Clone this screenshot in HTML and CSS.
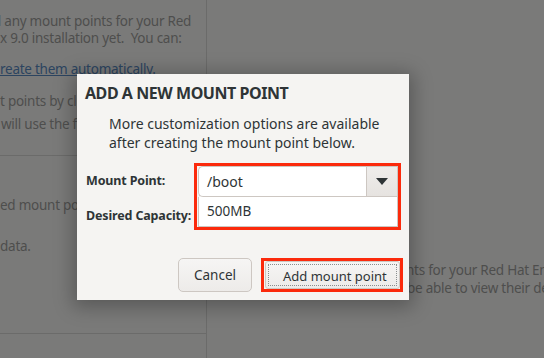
FILE: index.html
```html
<!DOCTYPE html>
<html>
<head>
<meta charset="utf-8">
<link rel="stylesheet" href="styles.css">
</head>
<body>
<div class="screen">
  <div class="left-pane">
    <div class="section intro">
      <p class="line l1">d any mount points for your Red</p>
      <p class="line l2">x 9.0 installation yet.&nbsp; You can:</p>
      <p class="line link">reate them automatically.</p>
      <p class="line l4">t points by cl</p>
      <p class="line l5">will use the fo</p>
    </div>
    <div class="section second">
      <p class="line l6">ed mount po</p>
      <p class="line l7">data.</p>
    </div>
    <div class="section third"></div>
  </div>
  <div class="right-pane">
    <p class="line r1">nts for your Red Hat En</p>
    <p class="line r2">be able to view their de</p>
  </div>
</div>

<div class="dialog">
  <h1 class="title">ADD A NEW MOUNT POINT</h1>
  <p class="desc">More customization options are available<br>after creating the mount point below.</p>
  <div class="form">
    <div class="labels">
      <label class="label">Mount Point:</label>
      <label class="label">Desired Capacity:</label>
    </div>
    <div class="highlight fields">
      <div class="combo">
        <div class="combo-entry">/boot</div>
        <div class="combo-btn">
          <svg width="12" height="7" viewBox="0 0 12 7"><path d="M0 0 L12 0 L6 7 Z" fill="#2e3436"/></svg>
        </div>
      </div>
      <div class="entry">500MB</div>
    </div>
  </div>
  <div class="actions">
    <button class="btn cancel">Cancel</button>
    <div class="highlight btn-wrap">
      <button class="btn add"><span class="focus">Add mount point</span></button>
    </div>
  </div>
</div>
</body>
</html>
```

FILE: styles.css
```css
* { box-sizing: border-box; }
html, body { margin: 0; padding: 0; }
body {
  width: 544px;
  height: 358px;
  overflow: hidden;
  background: #7a7a79;
  font-family: "Noto Sans", "Open Sans", sans-serif;
  position: relative;
}
.screen {
  display: flex;
  height: 358px;
}
.left-pane {
  width: 207px;
  border-right: 1px solid #6b6b6a;
  overflow: hidden;
  display: flex;
  flex-direction: column;
}
.line {
  margin: 0;
  font-size: 13.5px;
  letter-spacing: -0.25px;
  color: #4e4e4d;
  white-space: nowrap;
  line-height: 18px;
}
.intro {
  height: 156px;
  border-bottom: 1px solid #6b6b6a;
  padding-top: 12px;
}
.l1 { margin-left: -7px; }
.l2 { margin-top: -1px; }
.link {
  margin-top: 13px;
  color: #2c4460;
  text-decoration: underline;
  text-decoration-thickness: 1px;
}
.l4 { margin-top: 14px; }
.l5 { margin-top: 5px; margin-left: 1px; }
.second {
  height: 178px;
  border-bottom: 1px solid #6b6b6a;
  padding-top: 40px;
}
.l7 { margin-top: 23px; }
.right-pane {
  flex: 1;
  overflow: hidden;
  padding-top: 261px;
  padding-left: 199px;
}
.r2 { margin-left: 1px; }

.dialog {
  position: absolute;
  left: 77px;
  top: 74px;
  width: 332px;
  height: 226px;
  background: #f5f4f2;
  box-shadow: 0 3px 18px 4px rgba(0,0,0,0.28);
  padding: 9px 6px 8px 8px;
  display: flex;
  flex-direction: column;
  color: #2e3436;
}
.title {
  margin: 0;
  font-size: 16px;
  font-weight: 700;
  line-height: 20px;
  letter-spacing: -0.45px;
}
.desc {
  margin: 11px 0 0 24px;
  font-size: 14px;
  line-height: 19px;
  color: #2e3436;
}
.form {
  display: flex;
  margin-top: 11px;
  align-items: flex-start;
}
.labels {
  width: 109px;
  padding-top: 3px;
  padding-left: 1px;
  display: flex;
  flex-direction: column;
}
.label {
  font-size: 12.5px;
  font-weight: 700;
  height: 30px;
  line-height: 30px;
  white-space: nowrap;
  letter-spacing: -0.15px;
}
.label + .label { margin-top: 5px; }
.highlight {
  border: 3px solid #fb2a0c;
}
.fields {
  width: 207px;
  padding: 0 0 0 1px;
  display: flex;
  flex-direction: column;
}
.combo {
  display: flex;
  height: 31px;
}
.combo-entry {
  flex: 1;
  background: #fff;
  border: 1px solid #cdc7c2;
  border-right: none;
  border-radius: 5px 0 0 5px;
  font-size: 14px;
  line-height: 29px;
  padding-left: 8px;
}
.combo-btn {
  width: 32px;
  background: linear-gradient(#efedeb, #e6e3e0);
  border: 1px solid #cdc7c2;
  display: flex;
  align-items: center;
  justify-content: center;
}
.entry {
  height: 30px;
  background: #fff;
  border: 1px solid #cdc7c2;
  border-top: none;
  font-size: 13.5px;
  line-height: 29px;
  padding-left: 8px;
}
.actions {
  margin-top: auto;
  display: flex;
  justify-content: flex-end;
  align-items: flex-start;
  gap: 9px;
}
.btn {
  font-family: inherit;
  font-size: 13.5px;
  color: #2e3436;
  background: linear-gradient(#f6f5f4, #edebe9);
  border: 1px solid #cdc7c2;
  border-radius: 5px;
  height: 34px;
  padding: 0;
}
.cancel {
  width: 74px;
}
.btn-wrap {
  width: 142px;
  height: 34px;
  padding: 0 0 0 1px;
  display: flex;
}
.add {
  flex: 1;
  height: 28px;
  border-radius: 3px;
  padding: 2px;
  font-size: 13px;
}
.focus {
  display: block;
  height: 100%;
  border: 1px dotted #8a8f90;
  line-height: 22px;
  padding-left: 14px;
  text-align: left;
}
```
